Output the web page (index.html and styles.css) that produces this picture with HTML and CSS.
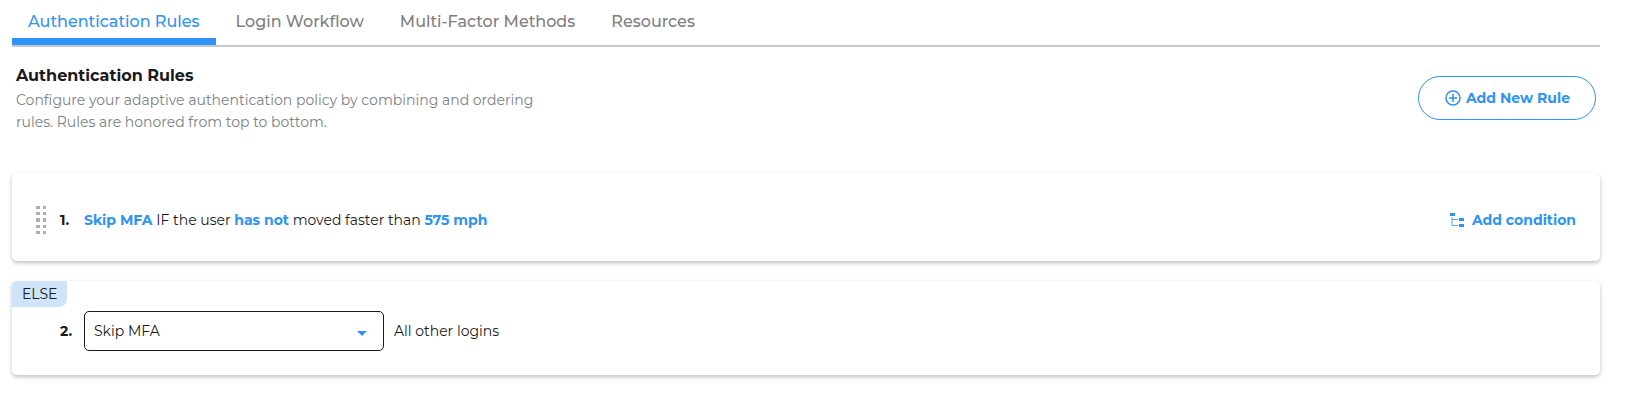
FILE: index.html
```html
<!DOCTYPE html>
<html lang="en">
<head>
  <meta charset="UTF-8" />
  <meta name="viewport" content="width=device-width, initial-scale=1.0"/>
  <title>Authentication Rules</title>
  <link rel="stylesheet" href="styles.css">
</head>
<body>

<nav class="tabs">
  <a class="tab active" href="#rules">Authentication Rules</a>
  <a class="tab" href="#workflow">Login Workflow</a>
  <a class="tab" href="#methods">Multi-Factor Methods</a>
  <a class="tab" href="#resources">Resources</a>
</nav>

<main>
  <header class="page-header">
    <div class="intro">
      <h1>Authentication Rules</h1>
      <p>Configure your adaptive authentication policy by combining and ordering rules. Rules are honored from top to bottom.</p>
    </div>
    <button class="add-rule" type="button">
      <svg width="16" height="16" viewBox="0 0 16 16" fill="none" stroke="currentColor" stroke-width="1.5" aria-hidden="true">
        <circle cx="8" cy="8" r="7"/>
        <path d="M8 4v8M4 8h8"/>
      </svg>
      Add New Rule
    </button>
  </header>

  <section class="card rule">
    <svg class="handle" width="10" height="28" viewBox="0 0 10 28" fill="#b0b0b0" aria-hidden="true">
      <path d="M0 0h4v3H0zM7 0h3v3H7zM0 6h4v3H0zM7 6h3v3H7zM0 12h4v4H0zM7 12h3v4H7zM0 19h4v3H0zM7 19h3v3H7zM0 25h4v3H0zM7 25h3v3H7z"/>
    </svg>
    <span class="number">1.</span>
    <p class="sentence"><a href="#action">Skip MFA</a> IF the user <a href="#operator">has not</a> moved faster than <a href="#speed">575 mph</a></p>
    <button class="add-condition" type="button">
      <svg width="14" height="14" viewBox="0 0 14 14" aria-hidden="true">
        <path d="M0 0h5v3H0zM9 5h5v3H9zM9 11h5v3H9z" fill="currentColor"/>
        <path d="M2 4v8.500h6M2 6.500h6" fill="none" stroke="currentColor" stroke-opacity="0.8"/>
      </svg>
      Add condition
    </button>
  </section>

  <section class="card else">
    <span class="badge">ELSE</span>
    <div class="else-row">
      <span class="number">2.</span>
      <div class="select">
        <select id="fallback">
          <option>Skip MFA</option>
          <option>Require MFA</option>
          <option>Deny access</option>
        </select>
        <svg width="10" height="5" viewBox="0 0 10 5" aria-hidden="true"><path d="M0 0h10L5 5z" fill="#2d93f7"/></svg>
      </div>
      <label for="fallback">All other logins</label>
    </div>
  </section>
</main>

</body>
</html>
```
FILE: styles.css
```css
* {
  box-sizing: border-box;
}

body {
  margin: 0;
  padding: 0 29px 32px 12px;
  font-family: Montserrat, Inter, sans-serif;
  font-size: 14px;
  font-weight: 400;
  line-height: 22px;
  background: #fff;
  color: #1a1a1a;
}

a {
  color: #2d93f7;
  text-decoration: none;
}

button {
  display: flex;
  align-items: center;
  padding: 0;
  border: none;
  background: none;
  color: #2d93f7;
  font: inherit;
  font-weight: 700;
  cursor: pointer;
}

/* Tabs */
.tabs {
  display: flex;
  gap: 4px;
  border-bottom: 2px solid #c5c9cd;
}

.tab {
  padding: 11px 16px 5px;
  border-bottom: 7px solid transparent;
  color: #808080;
  font-size: 16px;
  font-weight: 500;
}

.tab.active {
  border-color: #2d93f7;
  color: #2d93f7;
}

/* Page header */
.page-header {
  display: flex;
  justify-content: space-between;
  align-items: flex-start;
  padding: 18px 4px 40px;
}

.intro {
  max-width: 540px;
}

h1 {
  margin: 0 0 2px;
  font-size: 16px;
  font-weight: 700;
}

p {
  margin: 0;
}

.intro p {
  color: #7c8285;
}

.add-rule {
  gap: 5px;
  height: 44px;
  margin-top: 11px;
  padding: 0 25px 0 26px;
  border: 1px solid #2d93f7;
  border-radius: 22px;
}

/* Rules */
.card {
  border-radius: 5px;
  background: #fff;
  box-shadow: 0 2px 4px rgba(0, 0, 0, 0.25);
}

.rule {
  display: flex;
  align-items: center;
  min-height: 88px;
  margin-bottom: 20px;
  padding: 5px 24px 0;
}

.handle {
  margin-right: 14px;
}

.number {
  width: 24px;
  font-weight: 700;
}

.sentence {
  flex: 1;
}

.sentence a {
  font-weight: 700;
}

.add-condition {
  gap: 8px;
}

.else {
  padding-bottom: 24px;
}

.badge {
  display: block;
  width: fit-content;
  padding: 2px 10px;
  border-radius: 5px 0 8px 0;
  background: #cfe4f9;
}

.else-row {
  display: flex;
  align-items: center;
  padding: 4px 24px 0 48px;
}

.select {
  display: grid;
  align-items: center;
  width: 300px;
  margin-right: 10px;
}

.select select,
.select svg {
  grid-area: 1 / 1;
}

.select select {
  appearance: none;
  width: 100%;
  height: 40px;
  padding: 0 32px 0 9px;
  border: 1px solid #1a1a1a;
  border-radius: 5px;
  background: none;
  color: inherit;
  font: inherit;
}

.select svg {
  justify-self: end;
  margin: 4px 17px 0 0;
  pointer-events: none;
}
```
